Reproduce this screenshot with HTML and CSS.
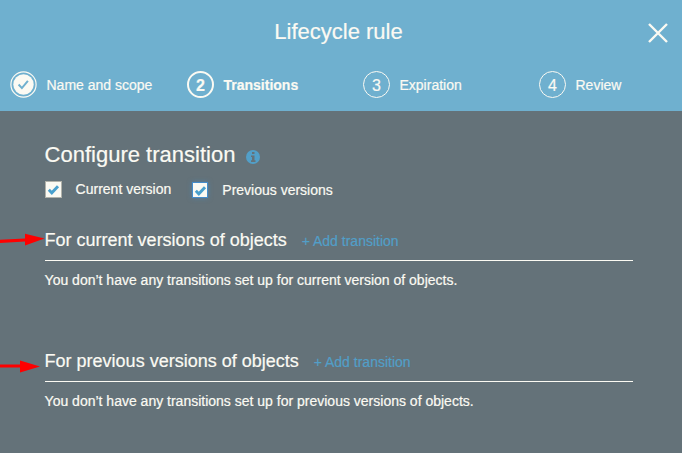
FILE: index.html
```html
<!DOCTYPE html>
<html lang="en">
<head>
<meta charset="utf-8">
<title>Lifecycle rule</title>
<link rel="stylesheet" href="styles.css">
</head>
<body>
<div class="dialog">
  <header class="header">
    <h1 class="title">Lifecycle rule</h1>
    <button class="close" aria-label="Close">
      <svg width="20" height="20" viewBox="0 0 20 20"><path d="M1 1L19 19M19 1L1 19"/></svg>
    </button>
    <ol class="steps">
      <li class="step">
        <svg class="done" width="27" height="27" viewBox="0 0 27 27"><circle class="ring" cx="13.5" cy="13.5" r="12.6"/><circle class="disc" cx="13.5" cy="13.5" r="10.2"/><path d="M8.6 13.5l3.3 3.6 6-7.3"/></svg>
        <span>Name and scope</span>
      </li>
      <li class="step active"><span class="number">2</span><span>Transitions</span></li>
      <li class="step"><span class="number">3</span><span>Expiration</span></li>
      <li class="step"><span class="number">4</span><span>Review</span></li>
    </ol>
  </header>
  <main class="content">
    <div class="heading">
      <h2>Configure transition</h2>
      <svg class="info" width="14" height="14" viewBox="0 0 14 14"><circle cx="7" cy="7" r="7"/><path d="M6 2h2.5v2H6zM5 5.5h3.5v4.7h1V12H5v-1.8h1V7H5z"/></svg>
    </div>
    <div class="options">
      <div class="option">
        <span class="box"><svg width="13" height="13" viewBox="0 0 13 13"><path d="M1.8 6.8l3 3 6.2-6.6"/></svg></span>
        <span>Current version</span>
      </div>
      <div class="option focused">
        <span class="box"><svg width="13" height="13" viewBox="0 0 13 13"><path d="M1.8 6.8l3 3 6.2-6.6"/></svg></span>
        <span>Previous versions</span>
      </div>
    </div>
    <section class="versions current">
      <div class="section-head"><h3>For current versions of objects</h3><a class="add">+ Add transition</a></div>
      <p>You don’t have any transitions set up for current version of objects.</p>
      <svg class="arrow" width="46" height="16" viewBox="0 0 46 16"><path d="M0 6.7L25 5.4V.7L44.5 5.5 25 12.5V8.6L0 9.9z"/></svg>
    </section>
    <section class="versions previous">
      <div class="section-head"><h3>For previous versions of objects</h3><a class="add">+ Add transition</a></div>
      <p>You don’t have any transitions set up for previous versions of objects.</p>
      <svg class="arrow" width="46" height="16" viewBox="0 0 46 16"><path d="M0 6.5H20V2.5L40 8.5 20 14.5V9.6H0z"/></svg>
    </section>
  </main>
</div>
</body>
</html>
```
FILE: styles.css
```css
* { box-sizing: border-box; }
body { margin: 0; font: 14px/20px "Liberation Sans", Arial, sans-serif; color: #fbfaf3; background: #647279; -webkit-text-stroke: 0.2px currentColor; }
h1, h2, h3, p, ol { margin: 0; padding: 0; font-weight: 400; }
svg { display: block; flex: none; }
.dialog { height: 453px; overflow: hidden; }
.header { position: relative; height: 111px; padding-top: 18px; background: #6fb0cf; }
.title { padding-right: 5px; font-size: 22px; line-height: 28px; text-align: center; }
.close { position: absolute; top: 23px; right: 14px; padding: 0; border: 0; background: none; }
.close path { fill: none; stroke: #fbfaf3; stroke-width: 2.4; }
.steps { display: grid; grid-template-columns: 177px 176px 176px 1fr; margin-top: 25px; padding-left: 10px; list-style: none; }
.step { display: flex; align-items: center; gap: 9.5px; height: 27px; }
.number { width: 27px; height: 27px; border: 1.5px solid #fbfaf3; border-radius: 50%; font-size: 16px; line-height: 27px; text-align: center; }
.active { font-weight: 700; }
.active .number { border-width: 2px; line-height: 25px; }
.ring { fill: none; stroke: #fbfaf3; stroke-width: 1.2; }
.disc { fill: #fbfaf3; }
.done path { fill: none; stroke: #6fb0cf; stroke-width: 2; }
.content { padding: 30px 49px 0 44.6px; }
.heading { display: flex; align-items: center; gap: 11px; height: 28px; }
.heading h2 { font-size: 22px; line-height: 28px; }
.info { margin-top: 4px; }
.info circle { fill: #529fc8; }
.info path { fill: #647279; }
.options { display: flex; gap: 21px; height: 32px; margin-top: 10px; }
.option { display: flex; align-items: center; gap: 14px; height: 20px; }
.focused { margin-top: 1px; }
.box { display: grid; place-items: center; width: 17px; height: 17px; border: 1px solid #b1b2aa; background: #fbfaf3; }
.focused .box { width: 16px; height: 16px; border-color: #448ccb; box-shadow: 0 0 5px #448ccb88; }
.box path { fill: none; stroke: #49a0cd; stroke-width: 2.9; }
.versions { position: relative; }
.current { height: 121px; margin-top: 16px; }
.section-head { display: flex; align-items: baseline; gap: 15px; height: 34px; border-bottom: 1px solid #fbfaf3; }
.section-head h3 { font-size: 18px; line-height: 26px; }
.add { color: #529fc8; }
.versions p { margin-top: 9px; }
.arrow { position: absolute; left: -44.6px; fill: #fe0000; }
.current .arrow { top: 6px; }
.previous .arrow { top: 10px; }
```
